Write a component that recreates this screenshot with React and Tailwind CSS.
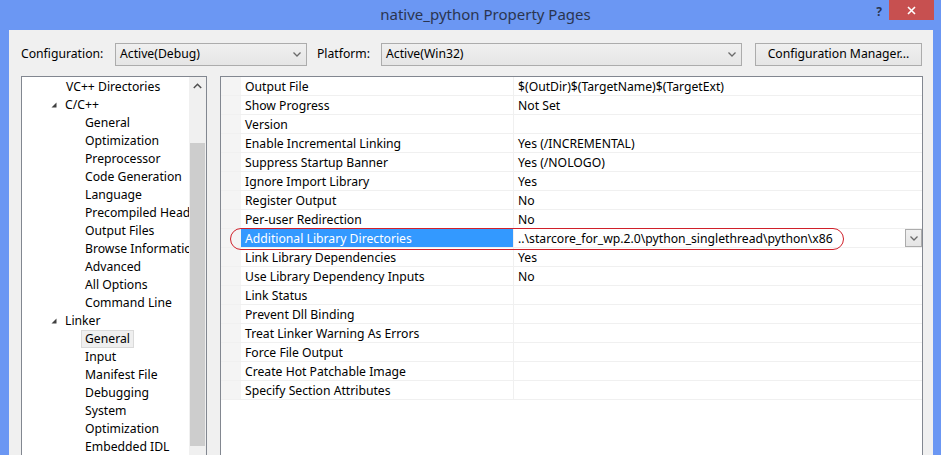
import React from "react";

const font = { fontFamily: '"Noto Sans", "Open Sans", sans-serif' };

function Chevron({ className = "" }) {
  return (
    <svg width="8" height="5" viewBox="0 0 8 5" className={className}>
      <path d="M0.5 0.5 L4 4 L7.5 0.5" fill="none" stroke="#6a6a6a" strokeWidth="1.3" />
    </svg>
  );
}

function Combo({ text, width }) {
  return (
    <div
      className={`${width} h-[23px] border border-[#acacac] bg-gradient-to-b from-[#f0f0f0] to-[#e5e5e5] flex items-center pl-[4px] pr-[5px] justify-between`}
    >
      <span className="text-[12.2px] text-[#000]">{text}</span>
      <Chevron />
    </div>
  );
}

function Expander() {
  return (
    <svg width="6" height="6" viewBox="0 0 6 6" className="mr-[8px]">
      <polygon points="5.5,0.5 5.5,5.5 0.5,5.5" fill="#404040" />
    </svg>
  );
}

const tree = [
  { t: "VC++ Directories", l: 1 },
  { t: "C/C++", l: 1, exp: true },
  { t: "General", l: 2 },
  { t: "Optimization", l: 2 },
  { t: "Preprocessor", l: 2 },
  { t: "Code Generation", l: 2 },
  { t: "Language", l: 2 },
  { t: "Precompiled Headers", l: 2 },
  { t: "Output Files", l: 2 },
  { t: "Browse Information", l: 2 },
  { t: "Advanced", l: 2 },
  { t: "All Options", l: 2 },
  { t: "Command Line", l: 2 },
  { t: "Linker", l: 1, exp: true },
  { t: "General", l: 2, sel: true },
  { t: "Input", l: 2 },
  { t: "Manifest File", l: 2 },
  { t: "Debugging", l: 2 },
  { t: "System", l: 2 },
  { t: "Optimization", l: 2 },
  { t: "Embedded IDL", l: 2 },
];

const props = [
  ["Output File", "$(OutDir)$(TargetName)$(TargetExt)"],
  ["Show Progress", "Not Set"],
  ["Version", ""],
  ["Enable Incremental Linking", "Yes (/INCREMENTAL)"],
  ["Suppress Startup Banner", "Yes (/NOLOGO)"],
  ["Ignore Import Library", "Yes"],
  ["Register Output", "No"],
  ["Per-user Redirection", "No"],
  ["Additional Library Directories", "..\\starcore_for_wp.2.0\\python_singlethread\\python\\x86", true],
  ["Link Library Dependencies", "Yes"],
  ["Use Library Dependency Inputs", "No"],
  ["Link Status", ""],
  ["Prevent Dll Binding", ""],
  ["Treat Linker Warning As Errors", ""],
  ["Force File Output", ""],
  ["Create Hot Patchable Image", ""],
  ["Specify Section Attributes", ""],
];

export default function App() {
  return (
    <div className="w-[941px] h-[455px] overflow-hidden bg-[#6b97f3] flex flex-col relative" style={font}>
      {/* Title bar */}
      <div className="h-[30px] shrink-0 flex items-center relative">
        <div className="flex-1 text-center text-[15px] text-[#2a3550] pl-[30px] pb-[1px]">native_python Property Pages</div>
        <div className="absolute right-[59px] top-[3px] text-[12px] font-bold text-[#2a3550]">?</div>
        <div className="absolute right-[7px] top-0 w-[45px] h-[20px] bg-[#c75050] flex items-center justify-center">
          <svg width="9" height="9" viewBox="0 0 9 9">
            <path d="M1 1 L8 8 M8 1 L1 8" stroke="#fff" strokeWidth="1.6" />
          </svg>
        </div>
      </div>

      {/* Client area */}
      <div className="flex-1 ml-[9px] mr-[8px] bg-[#f0f0f0] flex flex-col overflow-hidden">
        <div className="flex items-center h-[23px] mt-[13px] shrink-0">
          <span className="text-[12.2px] text-black ml-[12px] w-[94px]">Configuration:</span>
          <Combo text="Active(Debug)" width="w-[192px]" />
          <span className="text-[12.2px] text-black ml-[10px] w-[64px]">Platform:</span>
          <Combo text="Active(Win32)" width="w-[361px]" />
          <div className="ml-[13px] w-[167px] h-[23px] border border-[#acacac] bg-gradient-to-b from-[#f0f0f0] to-[#e5e5e5] flex items-center justify-center text-[12.2px] text-black">
            Configuration Manager...
          </div>
        </div>

        <div className="flex mt-[10px] ml-[12px] h-[400px]">
          {/* Tree */}
          <div className="w-[186px] h-full border border-[#828790] bg-white flex overflow-hidden">
            <div className="flex-1 overflow-hidden">
              {tree.map((it, i) => (
                <div
                  key={i}
                  className={`h-[18px] pt-[2px] flex items-center whitespace-nowrap text-[12.2px] text-black ${
                    it.l === 1 ? (it.exp ? "pl-[29px]" : "pl-[44px]") : "pl-[63px]"
                  }`}
                >
                  {it.exp && <Expander />}
                  <span
                    className={
                      it.sel
                        ? "-ml-[4px] px-[3px] h-[18px] flex items-center bg-[#efefef] border border-[#dadada]"
                        : ""
                    }
                  >
                    {it.t}
                  </span>
                </div>
              ))}
            </div>
            <div className="w-[17px] h-full bg-[#f0f0f0] flex flex-col items-center shrink-0">
              <div className="h-[17px] flex items-center justify-center pt-[1px]">
                <svg width="9" height="6" viewBox="0 0 9 6">
                  <path d="M0.8 5 L4.5 1.3 L8.2 5" fill="none" stroke="#505050" strokeWidth="1.5" />
                </svg>
              </div>
              <div className="w-[15px] mt-[49px] h-[303px] bg-[#cdcdcd]" />
            </div>
          </div>

          {/* Property grid */}
          <div className="ml-[13px] w-[703px] h-full border border-[#828790] bg-white relative">
            <div className="flex flex-col">
              {props.map(([n, v, sel], i) => (
                <div key={i} className="flex h-[19px] border-b border-[#f0f0f0]">
                  <div className="w-[20px] bg-[#f4f4f4] shrink-0" />
                  <div
                    className={`w-[273px] shrink-0 pl-[4px] pt-[2px] flex items-center text-[12.2px] whitespace-nowrap border-r border-[#f0f0f0] ${
                      sel ? "bg-[#3399ff] text-white" : "text-black"
                    }`}
                  >
                    {n}
                  </div>
                  <div className="flex-1 pl-[4px] pt-[2px] flex items-center text-[12.2px] text-black whitespace-nowrap relative">
                    {v}
                    {sel && (
                      <div className="absolute right-0 top-0 w-[17px] h-[18px] border border-[#acacac] bg-gradient-to-b from-[#f0f0f0] to-[#e5e5e5] flex items-center justify-center">
                        <Chevron />
                      </div>
                    )}
                  </div>
                </div>
              ))}
            </div>
            {/* red annotation oval */}
            <div className="absolute left-[9px] top-[151px] w-[614px] h-[22px] rounded-[12px] border border-[#d0202a]" />
          </div>
        </div>
      </div>
    </div>
  );
}
